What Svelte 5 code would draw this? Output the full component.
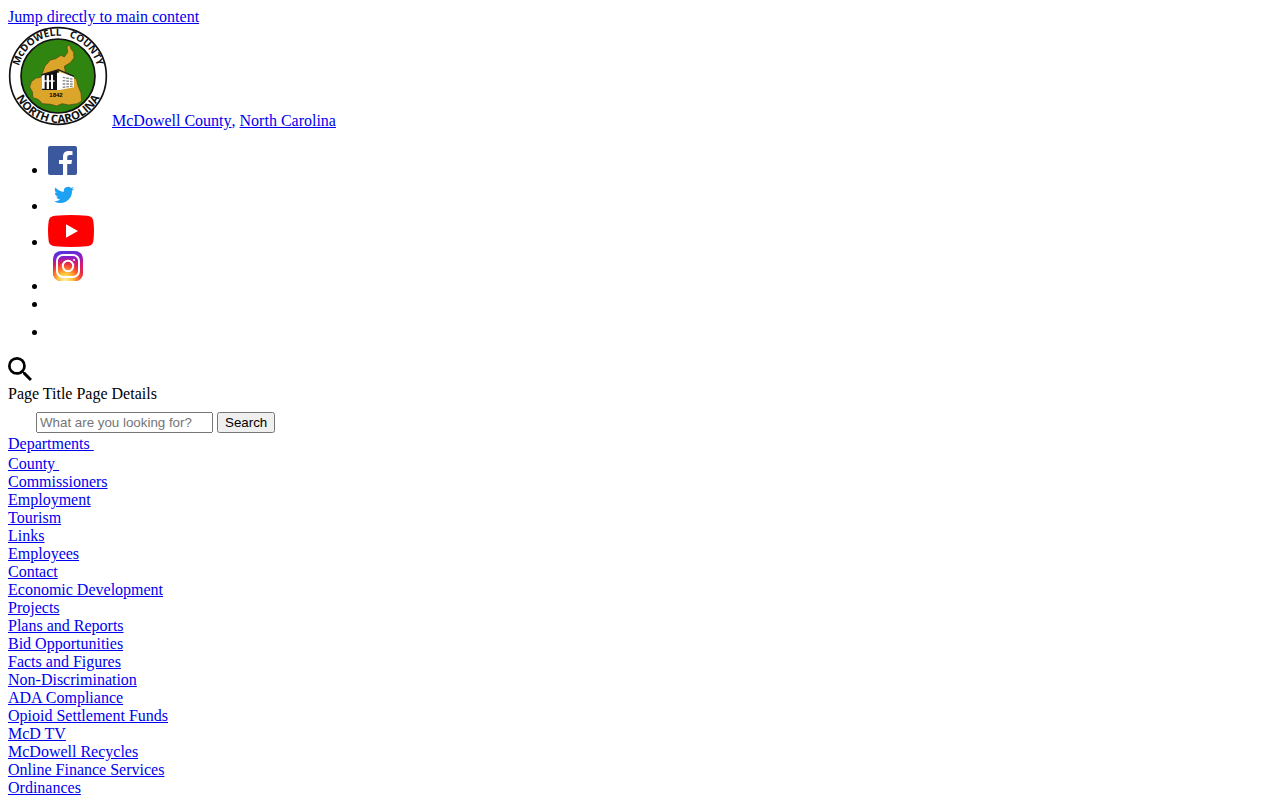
<script>
    let query = $state('');

    const menu = [
        { name: 'Departments', dropdown: true },
        { name: 'County', dropdown: true },
        { name: 'Commissioners' },
        { name: 'Employment' },
        { name: 'Tourism' },
        { name: 'Links' },
        { name: 'Employees' },
        { name: 'Contact' },
        { name: 'Economic Development' },
        { name: 'Projects' },
        { name: 'Plans and Reports' },
        { name: 'Bid Opportunities' },
        { name: 'Facts and Figures' },
        { name: 'Non-Discrimination' },
        { name: 'ADA Compliance' },
        { name: 'Opioid Settlement Funds' },
        { name: 'McD TV' },
        { name: 'McDowell Recycles' },
        { name: 'Online Finance Services' },
        { name: 'Ordinances' }
    ];
</script>

<div><a href="#main">Jump directly to main content</a></div>

<header>
    <a class="logo" href="#home" aria-label="McDowell County home">
        <svg width="100" height="100" viewBox="24 18 300 300">
            <defs>
                <path id="top-arc" d="M53 168a121 121 0 0 1 242 0" />
                <path id="bottom-arc" d="M33 168a141 141 0 0 0 282 0" />
            </defs>
            <circle cx="174" cy="168" r="145" fill="#fff" stroke="#111" stroke-width="5" />
            <circle cx="174" cy="168" r="111" fill="#2f8510" stroke="#111" stroke-width="5" />
            <path
                d="M208 73l5 14 8 10 1 17-11 14-18 11 3 17 11 10 22 11 5 20 9 22 2 24-13 8-26 4-20-4-16 7-18-5-24-2-14-13-15-5-2-18-8-14 5-16 14-11 14-2 5-13 8-21 16-18 16-4 16-10 10 5 10-14-2-16z"
                fill="#dba52a" stroke="#4c4513" stroke-width="2" />
            <path d="M126 163l50-13v60h-50z" fill="#111" />
            <path d="M126 166l8-2v42h-8zM140 166h7v41h-7zM153 164h6v43h-6zM171 158h9v52h-9z" fill="#fff" />
            <path d="M128 181h36v4h-36z" fill="#fff" />
            <path d="M178 156l44 14v32l-44 8z" fill="#fff" />
            <path d="M188 172l32 6M188 182l32 3M188 192l32 0M188 202l32-4" stroke="#888" stroke-width="4" stroke-dasharray="8 3" />
            <path d="M124 165l51-16 47 20" fill="none" stroke="#222" stroke-width="4" />
            <text class="year" x="168" y="232">1842</text>
            <text class="ring top"><textPath href="#top-arc" startOffset="50%">McDOWELL&nbsp;&nbsp;&nbsp;COUNTY</textPath></text>
            <text class="ring bottom"><textPath href="#bottom-arc" startOffset="50%">NORTH CAROLINA</textPath></text>
        </svg></a>
    <a href="#home">McDowell County<span class="comma">,</span></a> <a href="#home">North Carolina</a>
</header>

<ul>
    <li>
        <a href="#facebook" aria-label="Facebook">
            <svg width="29" height="29" viewBox="0 0 29 29">
                <rect width="29" height="29" rx="2" fill="#3b579d" />
                <path d="M15 29V18h-4v-4h4v-3C15 7 17 5 20.500 5c1.500 0 2.500.1 4 .2V9h-2.800c-2 0-2.500 1-2.500 2.300V14H24l-.6 4h-4.200v11z" fill="#fff" />
            </svg>
        </a>
    </li>
    <li>
        <a href="#twitter" aria-label="Twitter">
            <svg width="32" height="32" viewBox="-4 -4 38 38">
                <path
                    d="M27 7.500a10 10 0 0 1-2.800.8 4.900 4.900 0 0 0 2.100-2.700 10 10 0 0 1-3.100 1.200 4.900 4.900 0 0 0-8.300 4.400A13.800 13.800 0 0 1 4.900 6.100a4.900 4.900 0 0 0 1.500 6.500 4.800 4.800 0 0 1-2.200-.6 4.900 4.900 0 0 0 3.900 4.800 4.900 4.900 0 0 1-2.200.1 4.900 4.900 0 0 0 4.600 3.400 9.800 9.800 0 0 1-7.200 2A13.800 13.800 0 0 0 24.500 10 9.900 9.900 0 0 0 27 7.500z"
                    fill="#1da1f2" />
            </svg>
        </a>
    </li>
    <li>
        <a href="#youtube" aria-label="YouTube">
            <svg width="46" height="32" viewBox="0 0 46 32">
                <path d="M7 .8Q23-.8 39 .8q5.500.6 6.300 5 1.400 10.200 0 20.400-.8 4.400-6.300 5-16 1.600-32 0-5.500-.6-6.300-5-1.400-10.200 0-20.400Q1.500 1.400 7 .8z" fill="#f00" />
                <path d="M18 9.300v13.400L30 16z" fill="#fff" />
            </svg>
        </a>
    </li>
    <li>
        <a href="#instagram" aria-label="Instagram">
            <svg width="40" height="40" viewBox="0 0 40 40">
                <defs>
                    <linearGradient id="insta-base" x1="0" y1="0" x2=".15" y2="1">
                        <stop offset="0" stop-color="#4338e0" />
                        <stop offset=".3" stop-color="#8a1fc8" />
                        <stop offset=".6" stop-color="#d81a70" />
                        <stop offset="1" stop-color="#f0502a" />
                    </linearGradient>
                    <radialGradient id="insta-glow" cx=".4" cy="1" r=".8">
                        <stop offset="0" stop-color="#fff0b0" />
                        <stop offset=".3" stop-color="#ffc93a" />
                        <stop offset=".6" stop-color="#fb5a2a" />
                        <stop offset=".8" stop-color="#e0204f" stop-opacity=".8" />
                        <stop offset="1" stop-color="#d01a80" stop-opacity="0" />
                    </radialGradient>
                </defs>
                <rect x="5" width="30" height="30" rx="8" fill="url(#insta-base)" />
                <rect x="5" width="30" height="30" rx="8" fill="url(#insta-glow)" />
                <rect x="9" y="4" width="22" height="22" rx="6" fill="none" stroke="#fff" stroke-width="2" />
                <circle cx="20" cy="15" r="5.200" fill="none" stroke="#fff" stroke-width="2" />
                <circle cx="26" cy="9" r="1" fill="#fff" />
            </svg>
        </a>
    </li>
    <li>&nbsp;</li>
    <li><svg width="24" height="24" aria-hidden="true"></svg></li>
</ul>

<div>
    <svg width="24" height="24" viewBox="3 3 17.500 17.500" aria-hidden="true">
        <path
            d="M15.500 14h-.79l-.28-.27A6.471 6.471 0 0 0 16 9.500 6.500 6.500 0 1 0 9.500 16c1.610 0 3.090-.59 4.230-1.570l.27.280v.79l5 4.990L20.490 19l-4.990-5zm-6 0C7.010 14 5 11.990 5 9.500S7.010 5 9.500 5 14 7.010 14 9.500 11.990 14 9.500 14z" />
    </svg>
</div>

<div>Page Title Page Details</div>

<form onsubmit={(e) => e.preventDefault()}>
    <svg width="24" height="24" aria-hidden="true"></svg>
    <input type="text" placeholder="What are you looking for?" aria-label="Search" bind:value={query} />
    <button type="submit">Search</button>
</form>

<nav id="main">
    {#each menu as item}
        <div>
            {#if item.dropdown}
                <a href="#menu">{item.name}&nbsp;<span class="arrow"></span></a>
            {:else}
                <a href="#menu">{item.name}</a>
            {/if}
        </div>
    {/each}
</nav>

<style>
    :global(body) {
        margin: 8px;
        background: #fff;
        color: #000;
        font-family: "Liberation Serif", "Times New Roman", serif;
        font-size: 16px;
        line-height: 18px;
    }
    a {
        color: #0000ee;
        text-decoration: underline;
    }
    /* inline-block keeps the link underline off the comma */
    .comma {
        display: inline-block;
    }
    ul {
        margin: 16px 0;
        padding-left: 40px;
        list-style: disc;
    }
    .logo svg {
        overflow: visible;
    }
    .ring {
        font-family: "Open Sans", sans-serif;
        font-weight: 700;
        fill: #111;
        text-anchor: middle;
    }
    .top {
        font-size: 30px;
    }
    .bottom {
        font-size: 34px;
    }
    .year {
        font-family: "Liberation Sans", Arial, sans-serif;
        font-size: 18px;
        font-weight: 700;
        text-anchor: middle;
    }
    /* the browser's own control font size */
    input,
    button {
        font-family: "Liberation Sans", Arial, sans-serif;
    }
    input {
        box-sizing: border-box;
        width: 177px;
    }
    .arrow {
        display: inline-block;
        width: 0;
        height: 16px;
    }
</style>
